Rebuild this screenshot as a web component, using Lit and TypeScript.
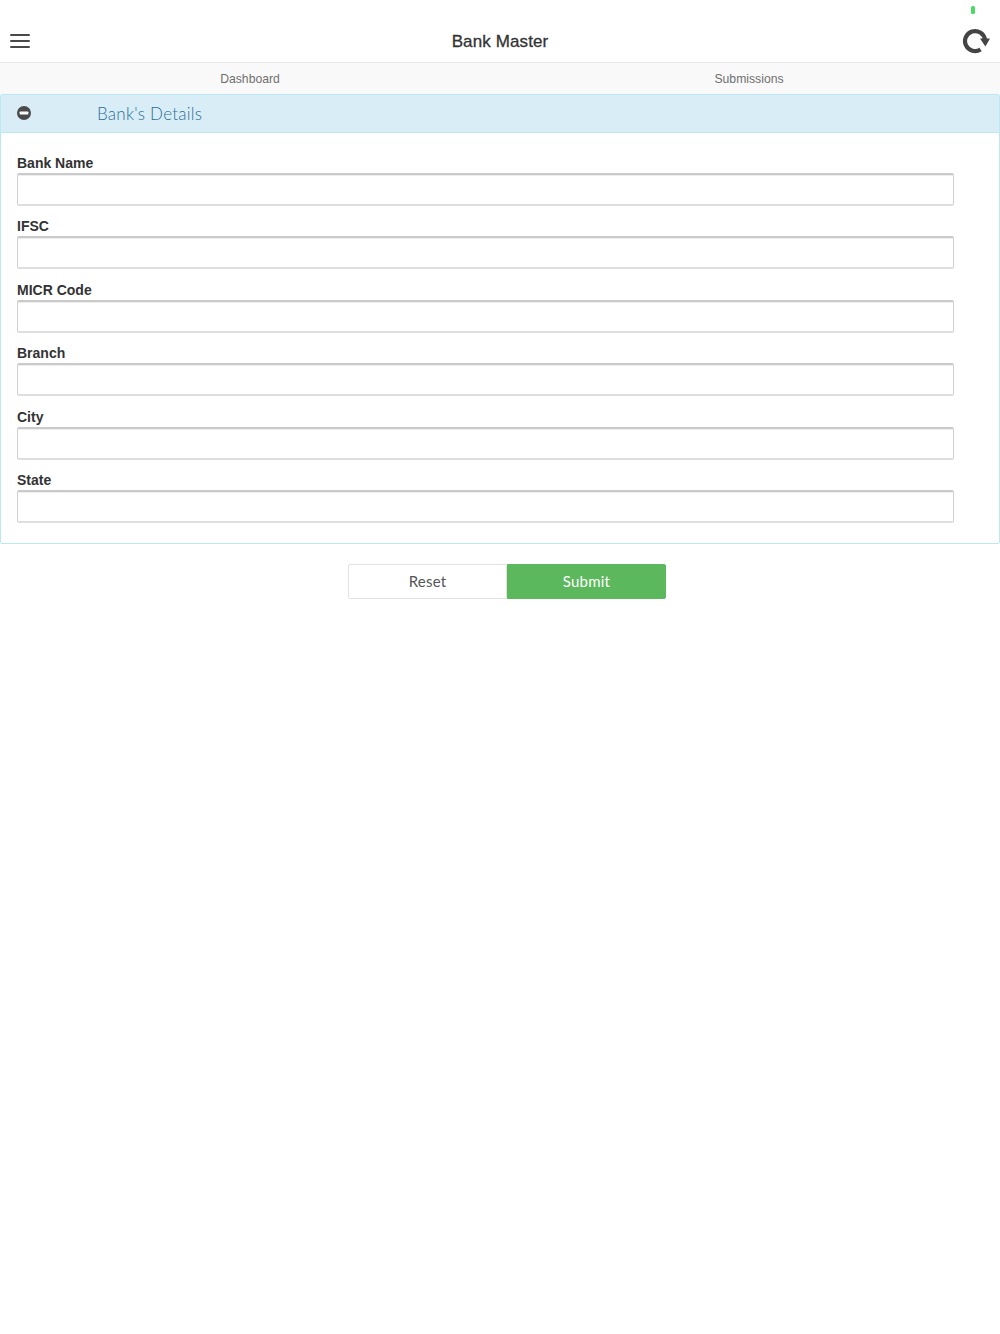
import { LitElement, html, css } from "lit";
import { customElement } from "lit/decorators.js";

const FIELDS = ["Bank Name", "IFSC", "MICR Code", "Branch", "City", "State"];

@customElement("app-root")
export class AppRoot extends LitElement {
  static styles = css`
    :host { display: block; position: relative; height: 1334px; background: #fff; color: #333; font-family: "Liberation Sans", Arial, sans-serif; }
    .battery { position: absolute; left: 971px; top: 6px; width: 4px; height: 8px; border-radius: 1.5px; background: #4cd964; }
    .topbar { box-sizing: border-box; height: 63px; padding: 20px 10px 0; display: grid; grid-template-columns: 1fr auto 1fr; align-items: center; border-bottom: 1px solid #e7e7e7; }
    .menu { display: flex; flex-direction: column; gap: 4px; width: 20px; }
    .menu span { display: block; height: 2px; background: #4a4a4a; border-radius: 1px; }
    .title { margin-top: 2px; font-size: 17px; letter-spacing: 0.12px; color: #333; -webkit-text-stroke: 0.3px #333; }
    .refresh { justify-self: end; width: 28px; height: 28px; display: block; }
    .tabs { display: grid; grid-template-columns: 1fr 1fr; height: 31px; background: #f9f9f9; align-items: center; text-align: center; font-size: 12.2px; color: #707070; }
    .tabs span:last-child { margin-right: 2px; }
    .panel { border: 1px solid #bce8f1; border-radius: 2px; background: #fff; }
    .head { height: 37px; background: #d9edf7; border-bottom: 1px solid #bce8f1; display: flex; align-items: center; padding-left: 15.7px; }
    .head svg { width: 14px; height: 14px; display: block; margin-top: -1px; }
    .head .txt { margin-left: 66.3px; margin-top: -1px; font-family: Lato, sans-serif; font-weight: 300; font-size: 17px; color: #2a6f98; letter-spacing: 0.25px; }
    .form { padding: 20px 45px 20px 16px; display: flex; flex-direction: column; }
    .field { display: flex; flex-direction: column; height: 63.4px; }
    .field:last-child { height: 53px; }
    label { font-size: 14px; font-weight: 700; line-height: 20px; height: 20px; color: #333; }
    input { display: block; box-sizing: border-box; width: 100%; height: 33px; margin: 0; padding: 0 8px; border: 1px solid #d0d0d0; border-top: 2px solid #cacaca; border-bottom: 2px solid #dedede; border-radius: 2px; box-shadow: inset 0 1px 0 #eee; background: #fff; outline: none; }
    .actions { display: flex; padding: 20px 0 0 348px; }
    button { width: 159px; height: 35px; box-sizing: border-box; margin: 0; font-family: Lato, sans-serif; font-size: 15px; letter-spacing: 0.2px; }
    .reset { background: #fff; color: #555; border: 1px solid #e2e2e2; border-radius: 2px 0 0 2px; }
    .submit { background: #5cb85c; color: #fff; border: 1px solid #5cb85c; border-radius: 0 2px 2px 0; }
  `;

  render() {
    return html`
      <div class="battery"></div>
      <header class="topbar">
        <div class="menu"><span></span><span></span><span></span></div>
        <div class="title">Bank Master</div>
        <svg class="refresh" viewBox="0 0 28 28" fill="none">
          <path d="M18.6 22.4A10 10 0 1 1 22.9 12.5" stroke="#444" stroke-width="4.2" />
          <path d="M18 11.6H28L23.4 19.6Z" fill="#444" />
        </svg>
      </header>
      <nav class="tabs"><span>Dashboard</span><span>Submissions</span></nav>
      <section class="panel">
        <div class="head">
          <svg viewBox="0 0 14 14"><circle cx="7" cy="7" r="7" fill="#4a4a4a"></circle><rect x="2.6" y="5.6" width="8.8" height="2.8" rx="0.6" fill="#fff"></rect></svg>
          <span class="txt">Bank's Details</span>
        </div>
        <div class="form">
          ${FIELDS.map((f) => html`<div class="field"><label>${f}</label><input type="text" /></div>`)}
        </div>
      </section>
      <div class="actions">
        <button class="reset">Reset</button>
        <button class="submit">Submit</button>
      </div>
    `;
  }
}
